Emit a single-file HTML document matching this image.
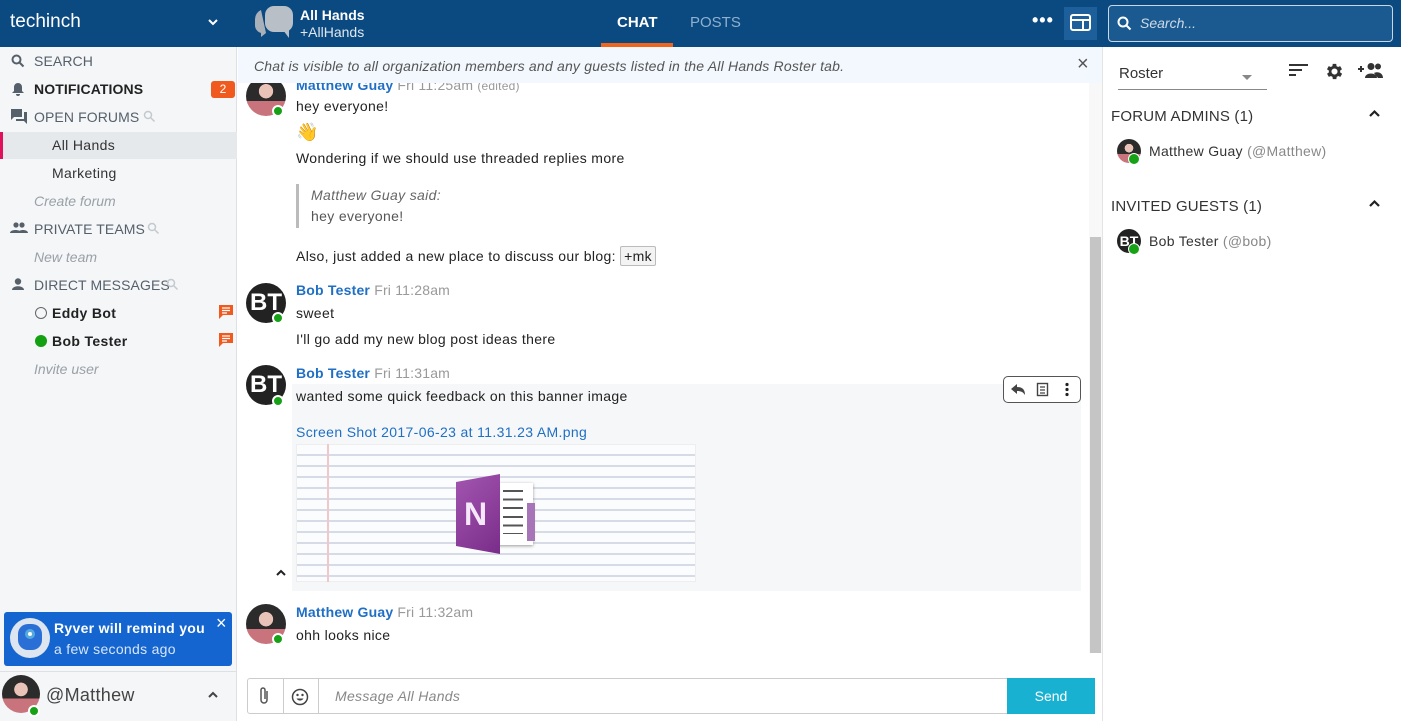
<!DOCTYPE html>
<html><head><meta charset="utf-8"><style>
*{margin:0;padding:0;box-sizing:border-box}
body{width:1401px;height:721px;overflow:hidden;font-family:"Liberation Sans",sans-serif;background:#fff;position:relative;color:#222}
.a{position:absolute;white-space:nowrap}
.top{left:0;top:0;width:1401px;height:47px;background:#0b4a80}
.side{left:0;top:47px;width:237px;height:674px;background:#f4f6f8;border-right:1px solid #dde1e5}
.si{font-size:14px;color:#56606b;letter-spacing:.1px}
.sb{font-weight:bold;color:#222}
.it{font-style:italic;color:#9aa0a6;font-size:14px}
.av{position:absolute;border-radius:50%;background:radial-gradient(circle at 50% 38%,#e9c2b8 0 22%,transparent 23%),linear-gradient(#2b2b2b 0 62%,#c9737c 62%);overflow:visible}
.bt{position:absolute;border-radius:50%;background:#222;color:#fff;font-weight:bold;text-align:center}
.dot{position:absolute;width:12px;height:12px;border-radius:50%;background:#17a117;border:2px solid #fff}
.nm{color:#1f6fc5;font-size:14px;font-weight:bold;letter-spacing:.2px}
.tm{color:#999;font-size:14px}
.tx{font-size:14px;color:#222;letter-spacing:.35px}
</style></head><body>
<div class="a top"></div>
<div class="a" style="left:10px;top:11px;font-size:19px;color:#fff">techinch</div>
<svg class="a" style="left:207px;top:17px" width="12" height="10"><path d="M2 3l4 4 4-4" stroke="#fff" stroke-width="2" fill="none"/></svg>
<svg class="a" style="left:253px;top:2px" width="46" height="38"><path d="M8 8a10 10 0 0 0-6 9v6a8 8 0 0 0 6 8v4l5-4" fill="#a8b0b9"/><rect x="12" y="4" width="28" height="26" rx="9" fill="#b8bfc7"/><path d="M30 28l6 8v-8z" fill="#b8bfc7"/></svg>
<div class="a" style="left:300px;top:7px;font-size:14px;font-weight:bold;color:#fff">All Hands</div>
<div class="a" style="left:300px;top:24px;font-size:14px;color:#dfe7ef">+AllHands</div>
<div class="a" style="left:617px;top:14px;font-size:15px;color:#fff;font-weight:bold">CHAT</div>
<div class="a" style="left:601px;top:43px;width:72px;height:4px;background:#f0641e"></div>
<div class="a" style="left:690px;top:14px;font-size:15px;color:#8fb0cf">POSTS</div>
<div class="a" style="left:1032px;top:10px;font-size:18px;color:#fff;font-weight:bold;letter-spacing:1px">&#8226;&#8226;&#8226;</div>
<div class="a" style="left:1064px;top:7px;width:33px;height:33px;background:#1d5f9a"></div>
<svg class="a" style="left:1070px;top:14px" width="22" height="18"><rect x="1" y="1" width="19" height="15" rx="2" stroke="#fff" stroke-width="2" fill="none"/><path d="M1 6h19M13 6v10" stroke="#fff" stroke-width="2"/></svg>
<div class="a" style="left:1108px;top:5px;width:285px;height:37px;border:1px solid #c9d7e5;border-radius:4px;background:#1a5a90"></div>
<svg class="a" style="left:1117px;top:16px" width="15" height="15"><circle cx="6" cy="6" r="4.5" stroke="#fff" stroke-width="2" fill="none"/><path d="M9.5 9.5l4 4" stroke="#fff" stroke-width="2"/></svg>
<div class="a" style="left:1140px;top:15px;font-size:14px;font-style:italic;color:#cfdbe7">Search...</div>

<div class="a side"></div>
<svg class="a" style="left:11px;top:54px" width="14" height="14"><circle cx="5.5" cy="5.5" r="4" stroke="#56606b" stroke-width="2" fill="none"/><path d="M8.5 8.5l4 4" stroke="#56606b" stroke-width="2"/></svg>
<div class="a si" style="left:34px;top:53px">SEARCH</div>
<svg class="a" style="left:12px;top:82px" width="12" height="14"><path d="M6 1a4 4 0 0 1 4 4v4l2 2H0l2-2V5a4 4 0 0 1 4-4zM4 12h4a2 2 0 0 1-4 0z" fill="#56606b"/></svg>
<div class="a si sb" style="left:34px;top:81px">NOTIFICATIONS</div>
<div class="a" style="left:211px;top:81px;width:24px;height:17px;background:#f05a1e;border-radius:3px;color:#fff;font-size:12px;text-align:center;line-height:17px">2</div>
<svg class="a" style="left:11px;top:109px" width="17" height="15"><path d="M0 0h11v8H3l-3 3zM13 3h3v12l-3-3H5V10h8z" fill="#56606b"/></svg>
<div class="a si" style="left:34px;top:109px">OPEN FORUMS</div>
<svg class="a" style="left:143px;top:110px" width="13" height="13"><circle cx="5" cy="5" r="3.5" stroke="#c4c9ce" stroke-width="1.5" fill="none"/><path d="M7.5 7.5l4 4" stroke="#c4c9ce" stroke-width="1.5"/></svg>
<div class="a" style="left:0;top:132px;width:237px;height:27px;background:#e6e9ec;border-left:3px solid #e0105a"></div>
<div class="a tx" style="left:52px;top:137px;color:#333">All Hands</div>
<div class="a tx" style="left:52px;top:165px;color:#333">Marketing</div>
<div class="a it" style="left:34px;top:193px">Create forum</div>
<svg class="a" style="left:10px;top:222px" width="18" height="12"><circle cx="6" cy="3" r="2.6" fill="#56606b"/><circle cx="12" cy="3" r="2.6" fill="#56606b"/><path d="M0 11c0-4 11-4 11 0zM8 11c0-4 10-4 10 0z" fill="#56606b"/></svg>
<div class="a si" style="left:34px;top:221px">PRIVATE TEAMS</div>
<svg class="a" style="left:147px;top:222px" width="13" height="13"><circle cx="5" cy="5" r="3.5" stroke="#c4c9ce" stroke-width="1.5" fill="none"/><path d="M7.5 7.5l4 4" stroke="#c4c9ce" stroke-width="1.5"/></svg>
<div class="a it" style="left:34px;top:249px">New team</div>
<svg class="a" style="left:12px;top:278px" width="12" height="13"><circle cx="6" cy="3.5" r="3.2" fill="#56606b"/><path d="M0 12c0-5 12-5 12 0z" fill="#56606b"/></svg>
<div class="a si" style="left:34px;top:277px">DIRECT MESSAGES</div>
<svg class="a" style="left:166px;top:278px" width="13" height="13"><circle cx="5" cy="5" r="3.5" stroke="#c4c9ce" stroke-width="1.5" fill="none"/><path d="M7.5 7.5l4 4" stroke="#c4c9ce" stroke-width="1.5"/></svg>
<div class="a" style="left:35px;top:307px;width:12px;height:12px;border:1.5px solid #666;border-radius:50%"></div>
<div class="a tx sb" style="left:52px;top:305px">Eddy Bot</div>
<div class="a" style="left:35px;top:335px;width:12px;height:12px;background:#13a013;border-radius:50%"></div>
<div class="a tx sb" style="left:52px;top:333px">Bob Tester</div>
<svg class="a" style="left:218px;top:305px" width="16" height="15"><path d="M1 0h14v10H5l-4 4z" fill="#f05a1e"/><path d="M4 3h8M4 5.5h8M4 8h5" stroke="#fff" stroke-width="1.2"/></svg>
<svg class="a" style="left:218px;top:333px" width="16" height="15"><path d="M1 0h14v10H5l-4 4z" fill="#f05a1e"/><path d="M4 3h8M4 5.5h8M4 8h5" stroke="#fff" stroke-width="1.2"/></svg>
<div class="a it" style="left:34px;top:361px">Invite user</div>

<div class="a" style="left:4px;top:612px;width:228px;height:54px;background:#1565d0;border-radius:3px"></div>
<div class="a" style="left:10px;top:618px;width:40px;height:40px;border-radius:50%;background:#dde6f0"></div>
<div class="a" style="left:18px;top:624px;width:24px;height:26px;border-radius:10px;background:#2a6fd6"></div>
<div class="a" style="left:25px;top:629px;width:10px;height:10px;border-radius:50%;background:#fff;border:3px solid #5ad"></div>
<div class="a" style="left:54px;top:620px;font-size:14px;font-weight:bold;color:#fff;letter-spacing:.3px">Ryver will remind you</div>
<div class="a" style="left:54px;top:641px;font-size:14px;color:#d8e6f8;letter-spacing:.3px">a few seconds ago</div>
<div class="a" style="left:216px;top:613px;font-size:18px;color:#fff">×</div>
<div class="a" style="left:0;top:671px;width:237px;height:1px;background:#dde1e5"></div>
<div class="av" style="left:2px;top:675px;width:38px;height:38px"></div>
<div class="dot" style="left:28px;top:705px"></div>
<div class="a" style="left:46px;top:685px;font-size:18px;color:#444;letter-spacing:.3px">@Matthew</div>
<svg class="a" style="left:207px;top:691px" width="12" height="8"><path d="M2 6l4-4 4 4" stroke="#444" stroke-width="2" fill="none"/></svg>

<!-- messages -->
<div class="a nm" style="left:296px;top:77px">Matthew Guay <span class="tm" style="font-weight:normal">Fri 11:25am <span style="font-size:12px">(edited)</span></span></div>
<div class="av" style="left:246px;top:76px;width:40px;height:40px"></div>
<div class="a" style="left:238px;top:47px;width:864px;height:36px;background:#f2f8fd"></div>
<div class="a" style="left:254px;top:58px;font-size:14px;font-style:italic;color:#555;letter-spacing:.2px">Chat is visible to all organization members and any guests listed in the All Hands Roster tab.</div>
<div class="a" style="left:1077px;top:53px;font-size:20px;color:#555">×</div>
<div class="dot" style="left:272px;top:105px"></div>
<div class="a tx" style="left:296px;top:98px">hey everyone!</div>
<div class="a" style="left:296px;top:122px;font-size:18px">👋</div>
<div class="a tx" style="left:296px;top:150px">Wondering if we should use threaded replies more</div>
<div class="a" style="left:296px;top:184px;width:3px;height:44px;background:#bbb"></div>
<div class="a tx" style="left:311px;top:187px;font-style:italic;color:#666">Matthew Guay said:</div>
<div class="a tx" style="left:311px;top:208px;color:#555">hey everyone!</div>
<div class="a tx" style="left:296px;top:248px">Also, just added a new place to discuss our blog: <span style="border:1px solid #bbb;border-radius:2px;background:#f3f3f3;padding:1px 3px">+mk</span></div>

<div class="bt" style="left:246px;top:283px;width:40px;height:40px;font-size:24px;line-height:40px">BT</div>
<div class="dot" style="left:272px;top:312px"></div>
<div class="a nm" style="left:296px;top:282px">Bob Tester <span class="tm" style="font-weight:normal">Fri 11:28am</span></div>
<div class="a tx" style="left:296px;top:305px">sweet</div>
<div class="a tx" style="left:296px;top:331px">I'll go add my new blog post ideas there</div>

<div class="a" style="left:292px;top:384px;width:789px;height:207px;background:#f6f7f8"></div>
<div class="bt" style="left:246px;top:365px;width:40px;height:40px;font-size:24px;line-height:40px">BT</div>
<div class="dot" style="left:272px;top:395px"></div>
<div class="a nm" style="left:296px;top:365px">Bob Tester <span class="tm" style="font-weight:normal">Fri 11:31am</span></div>
<div class="a tx" style="left:296px;top:388px">wanted some quick feedback on this banner image</div>
<div class="a" style="left:296px;top:424px;font-size:14px;color:#1f6fc5;letter-spacing:.35px">Screen Shot 2017-06-23 at 11.31.23 AM.png</div>
<div class="a" style="left:296px;top:444px;width:400px;height:138px;background:repeating-linear-gradient(#fbfcfd 0 9px,#d6dbe5 9px 11px);border:1px solid #eee"></div>
<div class="a" style="left:327px;top:444px;width:2px;height:138px;background:#f0c8cc"></div>
<div class="a" style="left:497px;top:483px;width:36px;height:62px;background:#fff;box-shadow:0 1px 3px #999"></div>
<div class="a" style="left:527px;top:503px;width:8px;height:38px;background:#a774b8"></div>
<div class="a" style="left:503px;top:490px;width:20px;height:44px;background:repeating-linear-gradient(#555 0 2px,transparent 2px 8.6px)"></div>
<div class="a" style="left:456px;top:474px;width:44px;height:80px;background:linear-gradient(135deg,#a356b0,#7a2c8a);clip-path:polygon(0 10%,100% 0,100% 100%,0 90%);color:#f5e8f8;font-weight:bold;font-size:32px;padding:22px 0 0 8px">N</div>
<svg class="a" style="left:275px;top:568px" width="12" height="9"><path d="M2 7l4-4 4 4" stroke="#222" stroke-width="2" fill="none"/></svg>
<div class="a" style="left:1003px;top:376px;width:78px;height:27px;border:1px solid #555;border-radius:5px;background:#fff"></div>
<svg class="a" style="left:1009px;top:382px" width="66" height="16"><path d="M2 7l6-5v3c5 0 8 2 8 8-2-3-4-4-8-4v3z" fill="#444"/><rect x="28.5" y="1.5" width="10" height="12" fill="none" stroke="#444" stroke-width="1.4"/><path d="M31 5h5M31 8h5M31 11h5" stroke="#444" stroke-width="1.2"/><circle cx="58" cy="2.5" r="1.6" fill="#222"/><circle cx="58" cy="7.5" r="1.6" fill="#222"/><circle cx="58" cy="12.5" r="1.6" fill="#222"/></svg>

<div class="av" style="left:246px;top:604px;width:40px;height:40px"></div>
<div class="dot" style="left:272px;top:633px"></div>
<div class="a nm" style="left:296px;top:604px">Matthew Guay <span class="tm" style="font-weight:normal">Fri 11:32am</span></div>
<div class="a tx" style="left:296px;top:627px">ohh looks nice</div>

<div class="a" style="left:1089px;top:83px;width:13px;height:570px;background:#f8f8f8"></div>
<div class="a" style="left:1090px;top:237px;width:11px;height:416px;background:#c5c5c5"></div>

<!-- input -->
<div class="a" style="left:238px;top:653px;width:864px;height:68px;background:#fff"></div>
<div class="a" style="left:247px;top:678px;width:848px;height:36px;border:1px solid #ccc;border-radius:3px"></div>
<div class="a" style="left:283px;top:678px;width:1px;height:36px;background:#ccc"></div>
<div class="a" style="left:318px;top:678px;width:1px;height:36px;background:#ccc"></div>
<svg class="a" style="left:258px;top:686px" width="14" height="20"><path d="M9 5v9a3 3 0 0 1-6 0V4a2 2 0 0 1 4 0v9" stroke="#555" stroke-width="1.5" fill="none"/></svg>
<svg class="a" style="left:291px;top:688px" width="18" height="18"><circle cx="9" cy="9" r="7.5" stroke="#444" stroke-width="1.5" fill="none"/><circle cx="6.5" cy="7" r="1.2" fill="#444"/><circle cx="11.5" cy="7" r="1.2" fill="#444"/><path d="M5.5 10.5a4 4 0 0 0 7 0z" fill="#444"/></svg>
<div class="a" style="left:335px;top:688px;font-size:14px;font-style:italic;color:#888;letter-spacing:.3px">Message All Hands</div>
<div class="a" style="left:1007px;top:678px;width:88px;height:36px;background:#19b1d1;color:#fff;font-size:14px;text-align:center;line-height:36px">Send</div>

<!-- right -->
<div class="a" style="left:1102px;top:47px;width:1px;height:674px;background:#e4e4e4"></div>
<div class="a" style="left:1119px;top:65px;font-size:15px;color:#333">Roster</div>
<div class="a" style="left:1118px;top:89px;width:149px;height:1px;background:#888"></div>
<svg class="a" style="left:1242px;top:75px" width="10" height="6"><path d="M0 0h10L5 5z" fill="#888"/></svg>
<svg class="a" style="left:1289px;top:63px" width="20" height="15"><path d="M0 2h19M0 7h13M0 12h7" stroke="#333" stroke-width="2"/></svg>
<svg class="a" style="left:1324px;top:61px" width="21" height="21" viewBox="0 0 24 24"><path fill="#333" d="M19.4 13a7.5 7.5 0 0 0 0-2l2.1-1.6-2-3.5-2.5 1a7.6 7.6 0 0 0-1.7-1L15 3.3h-4l-.4 2.6a7.6 7.6 0 0 0-1.7 1l-2.5-1-2 3.5L6.6 11a7.5 7.5 0 0 0 0 2l-2.1 1.6 2 3.5 2.5-1a7.6 7.6 0 0 0 1.7 1l.4 2.6h4l.4-2.6a7.6 7.6 0 0 0 1.7-1l2.5 1 2-3.5zM13 15.5a3.5 3.5 0 1 1 0-7 3.5 3.5 0 0 1 0 7z" transform="translate(-1 0)"/></svg>
<svg class="a" style="left:1358px;top:62px" width="26" height="17"><path d="M0 7h6M3 4v6" stroke="#333" stroke-width="2"/><circle cx="13" cy="4.5" r="3.5" fill="#333"/><circle cx="20" cy="4.5" r="3" fill="#333"/><path d="M7 16c0-6 12-6 12 0zM16 11c4-2 9 0 9 5h-5z" fill="#333"/></svg>
<div class="a" style="left:1111px;top:108px;font-size:15px;color:#333;letter-spacing:.2px">FORUM ADMINS (1)</div>
<svg class="a" style="left:1368px;top:109px" width="13" height="9"><path d="M2 7l4.5-4.5L11 7" stroke="#222" stroke-width="2.2" fill="none"/></svg>
<div class="av" style="left:1117px;top:139px;width:24px;height:24px"></div>
<div class="dot" style="left:1128px;top:153px;width:12px;height:12px;border-width:1px"></div>
<div class="a" style="left:1149px;top:143px;font-size:14px;color:#333;letter-spacing:.3px">Matthew Guay <span style="color:#888">(@Matthew)</span></div>
<div class="a" style="left:1111px;top:198px;font-size:15px;color:#333;letter-spacing:.2px">INVITED GUESTS (1)</div>
<svg class="a" style="left:1368px;top:199px" width="13" height="9"><path d="M2 7l4.5-4.5L11 7" stroke="#222" stroke-width="2.2" fill="none"/></svg>
<div class="bt" style="left:1117px;top:229px;width:24px;height:24px;font-size:14px;line-height:24px">BT</div>
<div class="dot" style="left:1128px;top:243px;width:12px;height:12px;border-width:1px"></div>
<div class="a" style="left:1149px;top:233px;font-size:14px;color:#333;letter-spacing:.3px">Bob Tester <span style="color:#888">(@bob)</span></div>
</body></html>
